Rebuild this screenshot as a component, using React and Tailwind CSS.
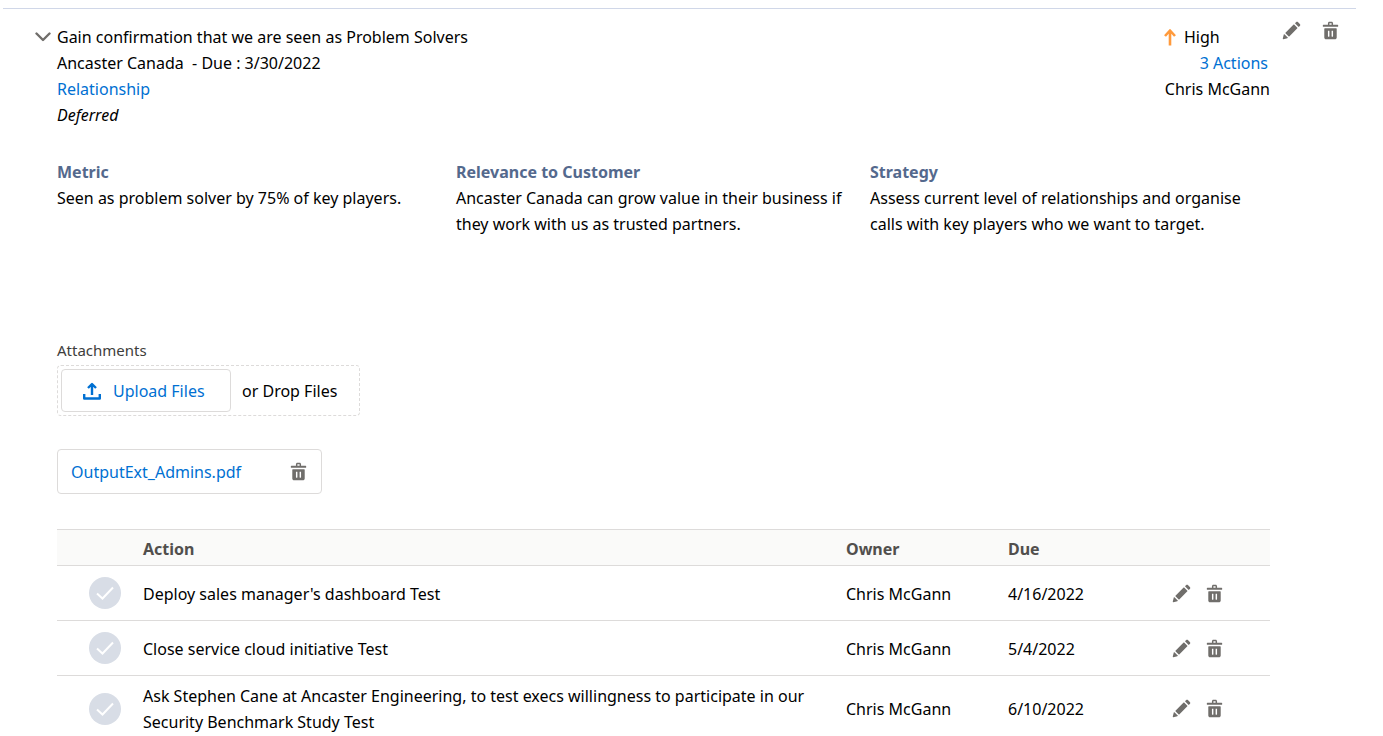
import React, { useState } from 'react';

const ACTIONS = [
  { id: 1, title: "Deploy sales manager's dashboard Test", owner: 'Chris McGann', due: '4/16/2022' },
  { id: 2, title: 'Close service cloud initiative Test', owner: 'Chris McGann', due: '5/4/2022' },
  {
    id: 3,
    title: 'Ask Stephen Cane at Ancaster Engineering, to test execs willingness to participate in our Security Benchmark Study Test',
    owner: 'Chris McGann',
    due: '6/10/2022',
  },
];

const DETAILS = [
  { label: 'Metric', text: 'Seen as problem solver by 75% of key players.' },
  {
    label: 'Relevance to Customer',
    text: 'Ancaster Canada can grow value in their business if they work with us as trusted partners.',
  },
  {
    label: 'Strategy',
    text: 'Assess current level of relationships and organise calls with key players who we want to target.',
  },
];

function EditIcon() {
  return (
    <svg viewBox="0 0 52 52" className="block size-[19px] fill-[#706e6b]" aria-hidden="true">
      <path d="M9.5 33.4l8.9 8.9c.4.4 1 .4 1.4 0L42 20c.4-.4.4-1 0-1.4l-8.8-8.8c-.4-.4-1-.4-1.4 0L9.5 32.1c-.4.4-.4 1 0 1.3zM36.1 5.7c-.4.4-.4 1 0 1.4l8.8 8.8c.4.4 1 .4 1.4 0l2.5-2.5c1.6-1.5 1.6-3.9 0-5.5l-4.7-4.7c-1.6-1.6-4.1-1.6-5.7 0l-2.3 2.5zM2.1 48.2c-.2 1 .7 1.9 1.7 1.7l10.9-2.6c.4-.1.7-.3.9-.5l.2-.2c.2-.2.3-.9-.1-1.3l-9-9c-.4-.4-1.1-.3-1.3-.1l-.2.2c-.3.3-.4.6-.5.9L2.1 48.2z" />
    </svg>
  );
}

function DeleteIcon() {
  return (
    <svg viewBox="0 0 52 52" className="block size-[19px] fill-[#706e6b]" aria-hidden="true">
      <path
        fillRule="evenodd"
        d="M45.5 10H33V6c0-2.2-1.8-4-4-4h-6c-2.2 0-4 1.8-4 4v4H6.5c-.8 0-1.5.7-1.5 1.5v3c0 .8.7 1.5 1.5 1.5h39c.8 0 1.5-.7 1.5-1.5v-3c0-.8-.7-1.5-1.5-1.5zM23 7c0-.6.4-1 1-1h4c.6 0 1 .4 1 1v3h-6V7zM41.5 20h-31c-.8 0-1.5.7-1.5 1.5V45c0 2.8 2.2 5 5 5h24c2.8 0 5-2.2 5-5V21.5c0-.8-.7-1.5-1.5-1.5zM23 42c0 .6-.4 1-1 1h-2c-.6 0-1-.4-1-1V28c0-.6.4-1 1-1h2c.6 0 1 .4 1 1v14zm10 0c0 .6-.4 1-1 1h-2c-.6 0-1-.4-1-1V28c0-.6.4-1 1-1h2c.6 0 1 .4 1 1v14z"
      />
    </svg>
  );
}

function IconButton({ label, onClick, children }) {
  return (
    <button type="button" aria-label={label} onClick={onClick} className="cursor-pointer">
      {children}
    </button>
  );
}

function ActionRow({ action, done, onToggle }) {
  return (
    <tr className="group border-b border-[#dddbda] last:border-b-0">
      <td className="py-[11px] pl-8 group-last:pt-[6px] group-last:pb-0">
        <button
          type="button"
          aria-label={`Complete ${action.title}`}
          aria-pressed={done}
          onClick={onToggle}
          className={`flex size-8 cursor-pointer items-center justify-center rounded-full ${done ? 'bg-[#4bca81]' : 'bg-[#d8dde6]'}`}
        >
          <svg viewBox="0 0 18 14" className="h-[14px] w-[18px] fill-none stroke-white stroke-2" aria-hidden="true">
            <path d="M1 7.5l5.5 5L17 1.5" />
          </svg>
        </button>
      </td>
      <td className="pt-[2px] pr-4 group-last:pt-[7px]">{action.title}</td>
      <td className="pt-[2px] group-last:pt-[7px]">{action.owner}</td>
      <td className="pt-[2px] group-last:pt-[7px]">{action.due}</td>
      <td className="group-last:pt-[6px]">
        <div className="flex gap-[14px]">
          <IconButton label="Edit action"><EditIcon /></IconButton>
          <IconButton label="Delete action"><DeleteIcon /></IconButton>
        </div>
      </td>
    </tr>
  );
}

export default function App() {
  const [open, setOpen] = useState(true);
  const [done, setDone] = useState([]);

  const toggleDone = (id) => {
    setDone(done.includes(id) ? done.filter(d => d !== id) : [...done, id]);
  };

  return (
    <main className="bg-white pt-2 pr-[27px] pl-[3px] font-['Segoe_UI','Noto_Sans',sans-serif] text-base leading-[26px] text-black">
      <section className="border-t border-[#d0d7e8] pt-3 pl-8">
        <header className="flex items-start">
          <button
            type="button"
            aria-label="Toggle objective"
            aria-expanded={open}
            onClick={() => setOpen(!open)}
            className="mt-[3px] flex h-[26px] w-[22px] cursor-pointer items-center"
          >
            <svg viewBox="0 0 16 10" className="h-[10px] w-4 fill-none stroke-[#706e6b] stroke-[2.4]" aria-hidden="true">
              <path d="M1.5 1.5L8 8l6.500-6.500" strokeLinecap="round" strokeLinejoin="round" />
            </svg>
          </button>
          <div className="flex-1 pt-[3px]">
            <h1>Gain confirmation that we are seen as Problem Solvers</h1>
            <p>Ancaster Canada&nbsp; - Due : 3/30/2022</p>
            <a href="#relationship" className="block text-[#0070d2]">Relationship</a>
            <p className="italic">Deferred</p>
          </div>
          <div className="w-[109px] pt-[3px]">
            <p className="flex items-center gap-2 pl-[3px]">
              <svg viewBox="0 0 12 18" className="h-[18px] w-3 fill-none stroke-[#ff9a3c] stroke-[2.6]" aria-hidden="true">
                <path d="M6 17.5V3M1 8l5-5.500L11 8" strokeLinejoin="round" />
              </svg>
              High
            </p>
            <a href="#actions" className="block pr-[2px] text-right text-[#0070d2]">3 Actions</a>
            <p className="text-right whitespace-nowrap">Chris McGann</p>
          </div>
          <div className="flex w-[86px] gap-5 pl-3">
            <IconButton label="Edit objective"><EditIcon /></IconButton>
            <IconButton label="Delete objective"><DeleteIcon /></IconButton>
          </div>
        </header>

        {open && (
          <div className="mr-[86px] ml-[22px]">
            <div className="mt-[31px] grid min-h-[156px] grid-cols-[399fr_414fr_400fr]">
              {DETAILS.map(d => (
                <div key={d.label} className="pr-3">
                  <h2 className="font-bold text-[#54698d]">{d.label}</h2>
                  <p>{d.text}</p>
                </div>
              ))}
            </div>

            <h3 className="mt-[22px] text-[15px] text-[#3e3e3c]">Attachments</h3>
            <div className="mt-[2px] flex w-[303px] items-center rounded border border-dashed border-[#dddbda] p-[3px]">
              <button
                type="button"
                className="flex h-[43px] w-[170px] cursor-pointer items-center gap-3 rounded border border-[#dddbda] pl-[21px] text-[#0070d2]"
              >
                <svg viewBox="0 0 18 18" className="size-[18px] fill-none stroke-[#0070d2] stroke-[2.4]" aria-hidden="true">
                  <path d="M1.2 12v4.500h15.600V12M9 13V2M5 6l4-4 4 4" strokeLinejoin="round" />
                </svg>
                Upload Files
              </button>
              <span className="pl-[11px]">or Drop Files</span>
            </div>

            <div className="mt-[33px] flex h-[45px] w-[265px] items-center justify-between rounded border border-[#dddbda] px-[13px]">
              <a href="#file" className="text-[#0070d2]">OutputExt_Admins.pdf</a>
              <IconButton label="Delete file"><DeleteIcon /></IconButton>
            </div>

            <table className="mt-[35px] w-full table-fixed border-collapse text-left">
              <thead>
                <tr className="h-[36px] border-y border-[#dddbda] bg-[#fafaf9] text-[#514f4d]">
                  <th className="w-[86px]" aria-label="Status" />
                  <th className="pt-[2px] font-bold">Action</th>
                  <th className="w-[162px] pt-[2px] font-bold">Owner</th>
                  <th className="w-[164px] pt-[2px] font-bold">Due</th>
                  <th className="w-[98px]" aria-label="Row actions" />
                </tr>
              </thead>
              <tbody>
                {ACTIONS.map(a => (
                  <ActionRow key={a.id} action={a} done={done.includes(a.id)} onToggle={() => toggleDone(a.id)} />
                ))}
              </tbody>
            </table>
          </div>
        )}
      </section>
    </main>
  );
}
